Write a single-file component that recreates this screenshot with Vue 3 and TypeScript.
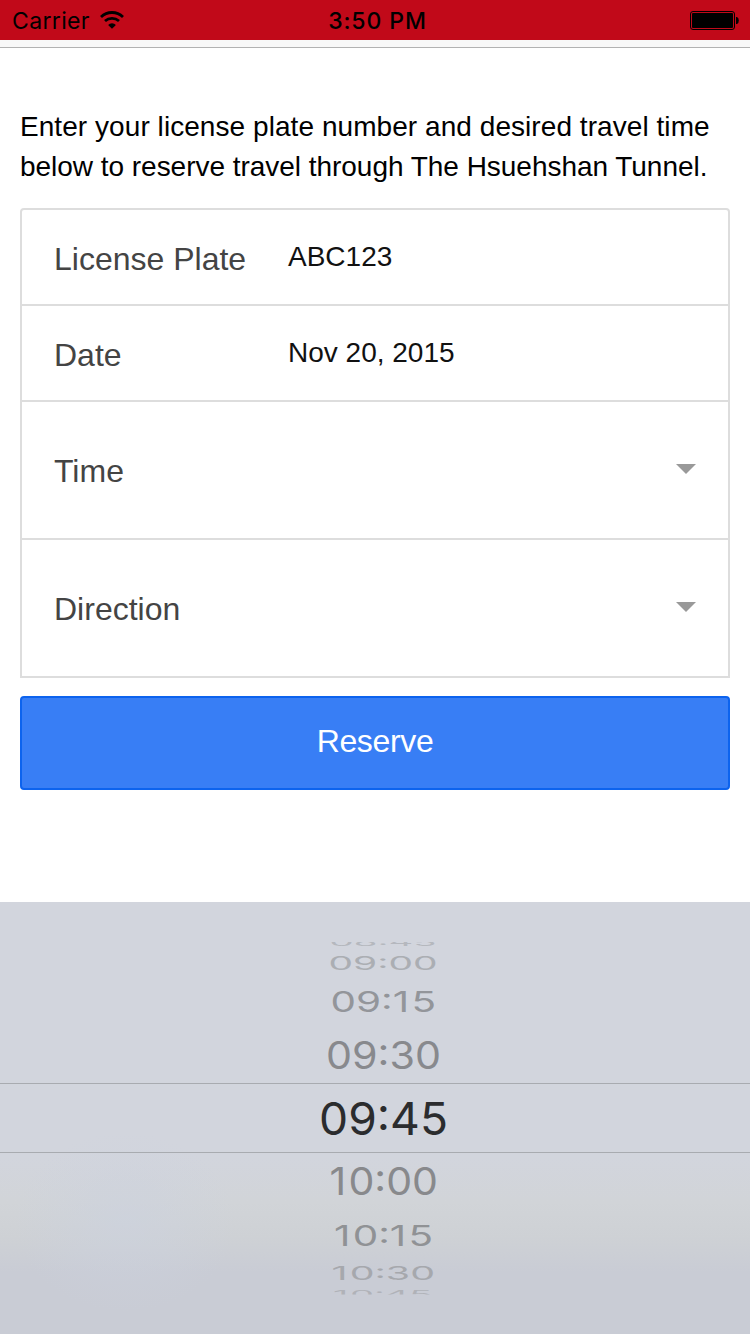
<script setup lang="ts">
interface WheelItem {
  label: string
  x: number
  width: number
  baseline: number
  height: number
  color: string
}

// Cap height of the wheel digits at a 46px font size
const CAP = 33.5

const wheel: WheelItem[] = [
  { label: '08:45', x: 329.5, width: 107, baseline: 946, height: 8, color: '#b5b8be' },
  { label: '09:00', x: 328.5, width: 109, baseline: 969.5, height: 13.3, color: '#abaeb3' },
  { label: '09:15', x: 330.5, width: 105.5, baseline: 1011.5, height: 21, color: '#93959a' },
  { label: '09:30', x: 326, width: 115, baseline: 1069, height: 27.5, color: '#88898d' },
  { label: '09:45', x: 319, width: 129, baseline: 1135, height: 33.3, color: '#2b2c2e' },
  { label: '10:00', x: 329.5, width: 108.5, baseline: 1195, height: 27.3, color: '#88898c' },
  { label: '10:15', x: 334, width: 99, baseline: 1246, height: 21, color: '#909295' },
  { label: '10:30', x: 331.5, width: 103.5, baseline: 1280, height: 13.3, color: '#a6a8ad' },
  { label: '10:45', x: 333, width: 99, baseline: 1297.5, height: 7.5, color: '#b0b2b8' },
]

// Opens a little room after each narrow "1"
const kerning = (label: string): string =>
  [...label].map((_, i) => (i > 0 && label[i - 1] === '1' ? 2.5 : 0)).join(' ')
</script>

<template>
  <div class="screen">
    <header class="status">
      <div class="carrier">
        <span class="carrier-name">Carrier</span>
        <svg class="wifi" width="24" height="18" viewBox="0 0 24 18">
          <path d="M1 5.9a16 16 0 0 1 22 0" />
          <path d="M5 10a10.500 10.500 0 0 1 14 0" />
          <path class="dot" d="M12 17.800l-3.900-3.900a5.500 5.500 0 0 1 7.800 0z" />
        </svg>
      </div>
      <span class="clock">3:50 PM</span>
      <svg class="battery" width="50" height="20" viewBox="0 0 50 20">
        <rect x="0.5" y="1.5" width="44" height="18" rx="2.500" class="shell" />
        <rect x="2" y="3" width="41" height="15" rx="1" />
        <path d="M46 7h1q1.800 .7 1.800 3.500t-1.800 3.500H46z" />
      </svg>
    </header>
    <div class="navbar"></div>

    <main class="content">
      <p class="intro">
        <span class="line-a">Enter your license plate number and desired travel time</span>
        <span class="line-b">below to reserve travel through The Hsuehshan Tunnel.</span>
      </p>
      <div class="list">
        <div class="row"><span class="label">License Plate</span><span class="value">ABC123</span></div>
        <div class="row"><span class="label">Date</span><span class="value">Nov 20, 2015</span></div>
        <div class="row tall"><span class="label">Time</span><i class="caret"></i></div>
        <div class="row tall"><span class="label">Direction</span><i class="caret"></i></div>
      </div>
      <button class="reserve" type="button">Reserve</button>
    </main>

    <section class="picker">
      <svg width="750" height="432" viewBox="0 902 750 432">
        <defs>
          <clipPath id="drum"><rect x="0" y="942" width="750" height="352.500" /></clipPath>
        </defs>
        <path d="M0 1083.500H750M0 1152.500H750" stroke="#a8abb0" stroke-width="1" />
        <g clip-path="url(#drum)">
          <text
            v-for="item in wheel"
            :key="item.label"
            class="digit"
            :transform="`translate(${item.x} ${item.baseline}) scale(1 ${item.height / CAP})`"
            :dx="kerning(item.label)"
            :textLength="item.width"
            lengthAdjust="spacingAndGlyphs"
            :fill="item.color"
          >{{ item.label }}</text>
        </g>
      </svg>
    </section>
  </div>
</template>

<style>
body {
  margin: 0;
  background: #fff;
}
</style>

<style scoped>
.screen {
  width: 750px;
  height: 1334px;
  display: flex;
  flex-direction: column;
  overflow: hidden;
  background: #fff;
  font-family: "Liberation Sans", Arial, sans-serif;
}
.status {
  height: 40px;
  flex: none;
  display: grid;
  grid-template-columns: 1fr auto 1fr;
  align-items: center;
  box-sizing: border-box;
  padding: 0 10px 0 12px;
  background: #c10919;
  color: #000;
  font-family: Inter, sans-serif;
  font-size: 23px;
}
.carrier {
  display: flex;
  align-items: center;
  gap: 10px;
}
.carrier-name {
  letter-spacing: 0.35px;
  padding-top: 2px;
}
.wifi {
  overflow: visible;
  fill: none;
  stroke: #000;
  stroke-width: 2.8;
}
.wifi .dot {
  fill: #000;
  stroke: none;
}
.clock {
  font-weight: 500;
  letter-spacing: 0.9px;
  padding: 2px 0 0 3px;
}
.battery {
  justify-self: end;
}
.battery .shell {
  fill: none;
  stroke: #000;
}
.navbar {
  height: 7px;
  flex: none;
  background: #f8f8f8;
  border-bottom: 1px solid #b2b2b2;
}
.content {
  flex: 1;
  padding: 59px 20px 0;
}
.intro {
  margin: 0 0 21px;
  font-size: 28px;
  line-height: 40px;
  color: #000;
}
.intro span {
  display: block;
  white-space: nowrap;
}
.line-a {
  letter-spacing: 0.06px;
}
.line-b {
  letter-spacing: -0.03px;
}
.list {
  border: 2px solid #ddd;
  border-radius: 4px 4px 0 0;
}
.row {
  height: 94px;
  display: flex;
  align-items: center;
  border-bottom: 2px solid #ddd;
  padding: 0 32px;
}
.row:last-child {
  border-bottom: 0;
}
.row.tall {
  height: 134px;
  padding-bottom: 2px;
  justify-content: space-between;
}
.label {
  color: #444;
  font-size: 32px;
  line-height: 40px;
  padding-top: 4px;
}
.row:not(.tall) .label {
  width: 234px;
}
.value {
  color: #111;
  font-size: 28px;
  line-height: 40px;
}
.caret {
  border: 10px solid transparent;
  border-top-color: #999;
  border-bottom: 0;
}
.reserve {
  display: block;
  width: 710px;
  height: 94px;
  margin: 18px 0 0;
  padding: 0 0 4px;
  border: 2px solid #0c63ee;
  border-radius: 4px;
  background: #387ef5;
  color: #fff;
  font: 32px/86px "Liberation Sans", Arial, sans-serif;
  letter-spacing: -0.35px;
}
.picker {
  height: 432px;
  flex: none;
  background:
    radial-gradient(ellipse 110px 90px at 125px 320px, rgba(204, 210, 223, 0.6), transparent),
    linear-gradient(#d2d5dd 0, #d2d5dd 255px, #d1d4d8 300px, #ced1d5 335px, #c9ccd5 370px, #c9ccd5 100%);
}
.picker svg {
  display: block;
}
.digit {
  font-family: Inter, sans-serif;
  font-size: 46px;
}
</style>
